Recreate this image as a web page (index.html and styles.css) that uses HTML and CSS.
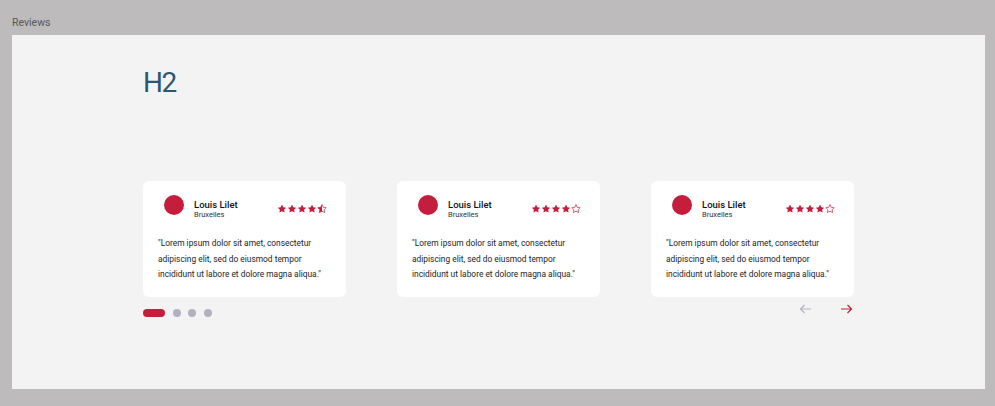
FILE: index.html
```html
<!DOCTYPE html>
<html>
<head>
<meta charset="utf-8">
<link rel="stylesheet" href="styles.css">
</head>
<body>
<div class="label">Reviews</div>
<section class="panel">
  <h2 class="title">H2</h2>
  <div class="cards">
    <article class="card">
      <header class="card-head">
        <span class="avatar"></span>
        <div class="who"><div class="name">Louis Lilet</div><div class="city">Bruxelles</div></div>
        <svg class="stars" viewBox="0 0 50 10" width="50" height="10">
          <defs>
            <path id="st" d="M5 0.6l1.3 2.7 2.9.4-2.1 2 .5 2.9L5 7.2 2.4 8.6l.5-2.9-2.1-2 2.9-.4z"/>
          </defs>
          <use href="#st" x="0" fill="#c41e3c"/>
          <use href="#st" x="10" fill="#c41e3c"/>
          <use href="#st" x="20" fill="#c41e3c"/>
          <use href="#st" x="30" fill="#c41e3c"/>
          <use href="#st" x="40" fill="none" stroke="#c41e3c" stroke-width="0.7"/>
          <path d="M45 0.6V7.2L42.4 8.6l.5-2.9-2.1-2 2.9-.4z" fill="#c41e3c"/>
        </svg>
      </header>
      <p class="quote">"Lorem ipsum dolor sit amet, consectetur adipiscing elit, sed do eiusmod tempor incididunt ut labore et dolore magna aliqua."</p>
    </article>
    <article class="card">
      <header class="card-head">
        <span class="avatar"></span>
        <div class="who"><div class="name">Louis Lilet</div><div class="city">Bruxelles</div></div>
        <svg class="stars" viewBox="0 0 50 10" width="50" height="10">
          <use href="#st" x="0" fill="#c41e3c"/>
          <use href="#st" x="10" fill="#c41e3c"/>
          <use href="#st" x="20" fill="#c41e3c"/>
          <use href="#st" x="30" fill="#c41e3c"/>
          <use href="#st" x="40" fill="none" stroke="#c41e3c" stroke-width="0.7"/>
        </svg>
      </header>
      <p class="quote">"Lorem ipsum dolor sit amet, consectetur adipiscing elit, sed do eiusmod tempor incididunt ut labore et dolore magna aliqua."</p>
    </article>
    <article class="card">
      <header class="card-head">
        <span class="avatar"></span>
        <div class="who"><div class="name">Louis Lilet</div><div class="city">Bruxelles</div></div>
        <svg class="stars" viewBox="0 0 50 10" width="50" height="10">
          <use href="#st" x="0" fill="#c41e3c"/>
          <use href="#st" x="10" fill="#c41e3c"/>
          <use href="#st" x="20" fill="#c41e3c"/>
          <use href="#st" x="30" fill="#c41e3c"/>
          <use href="#st" x="40" fill="none" stroke="#c41e3c" stroke-width="0.7"/>
        </svg>
      </header>
      <p class="quote">"Lorem ipsum dolor sit amet, consectetur adipiscing elit, sed do eiusmod tempor incididunt ut labore et dolore magna aliqua."</p>
    </article>
  </div>
  <div class="controls">
    <div class="dots">
      <span class="dot active"></span>
      <span class="dot"></span>
      <span class="dot"></span>
      <span class="dot"></span>
    </div>
    <div class="arrows">
      <svg class="arrow prev" width="13" height="10" viewBox="0 0 13 10"><path d="M12 5H1.5M5.5 1L1.5 5l4 4" fill="none" stroke="#b3b3c2" stroke-width="1.2"/></svg>
      <svg class="arrow next" width="13" height="10" viewBox="0 0 13 10"><path d="M1 5h10.5M7.5 1l4 4-4 4" fill="none" stroke="#c41e3c" stroke-width="1.2"/></svg>
    </div>
  </div>
</section>
</body>
</html>
```
FILE: styles.css
```css
html, body {
  margin: 0;
  padding: 0;
}
body {
  background: #bdbbbb;
  font-family: Roboto, "Liberation Sans", sans-serif;
  width: 995px;
  height: 406px;
  overflow: hidden;
}
.label {
  height: 35px;
  box-sizing: border-box;
  padding: 16px 0 0 12px;
  font-size: 10.5px;
  line-height: 14px;
  color: #585858;
}
.panel {
  margin: 0 10px 0 12px;
  height: 354px;
  box-sizing: border-box;
  background: #f3f3f3;
  padding: 31px 0 0 131px;
}
.title {
  margin: 0;
  font-size: 28px;
  line-height: 33px;
  font-weight: 400;
  letter-spacing: -1.5px;
  color: #2e5673;
}
.cards {
  display: flex;
  gap: 51px;
  margin-top: 82px;
}
.card {
  width: 203px;
  height: 116px;
  box-sizing: border-box;
  background: #fff;
  border-radius: 6px;
  padding: 14px 20px 0 15px;
}
.card-head {
  display: flex;
  align-items: flex-start;
  padding-left: 6px;
}
.avatar {
  width: 20px;
  height: 20px;
  border-radius: 50%;
  background: #c41e3c;
  flex: none;
}
.who {
  margin-left: 10px;
  flex: 1;
  padding-top: 4px;
}
.name {
  font-size: 9.5px;
  line-height: 11px;
  font-weight: 500;
  color: #111;
}
.city {
  font-size: 7.5px;
  line-height: 10px;
  color: #333;
}
.stars {
  margin-top: 9px;
  margin-right: -1px;
  flex: none;
}
.quote {
  margin: 16px 0 0;
  font-size: 8.4px;
  line-height: 15.5px;
  color: #1d1d1d;
}
.controls {
  width: 711px;
  display: flex;
  justify-content: space-between;
  align-items: flex-start;
}
.dots {
  display: flex;
  gap: 7.5px;
  margin-top: 12px;
}
.dot {
  width: 8px;
  height: 8px;
  border-radius: 50%;
  background: #b1b1c0;
}
.dot.active {
  width: 22px;
  border-radius: 4px;
  background: #c41e3c;
}
.arrows {
  display: flex;
  gap: 28px;
  margin-top: 7px;
  margin-right: 1px;
}
.arrow {
  display: block;
}
```
